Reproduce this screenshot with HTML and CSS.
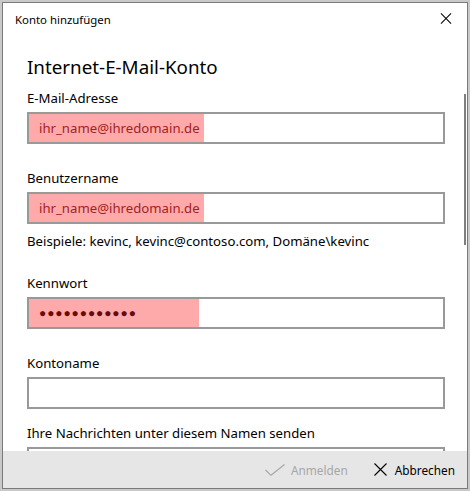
FILE: index.html
```html
<!DOCTYPE html>
<html lang="de">
<head>
    <meta charset="UTF-8">
    <link rel="stylesheet" href="styles.css">
    <title>Konto hinzufügen</title>
</head>
<body>
    <div class="window">
        <div class="titlebar">
            <span class="title">Konto hinzufügen</span>
            <svg class="close" width="12" height="12" viewBox="0 0 12 12">
                <path d="M0.5 0.5 L11.5 11.5 M11.5 0.5 L0.5 11.5" stroke="#000" stroke-width="1.1" fill="none"/>
            </svg>
        </div>

        <div class="content">
            <h1>Internet-E-Mail-Konto</h1>

            <div class="field first">
                <label>E-Mail-Adresse</label>
                <div class="input"><span class="filled">ihr_name@ihredomain.de</span></div>
            </div>

            <div class="field">
                <label>Benutzername</label>
                <div class="input"><span class="filled">ihr_name@ihredomain.de</span></div>
                <div class="hint">Beispiele: kevinc, kevinc@contoso.com, Domäne\kevinc</div>
            </div>

            <div class="field after-hint">
                <label>Kennwort</label>
                <div class="input"><span class="filled dots">●●●●●●●●●●●●</span></div>
            </div>

            <div class="field">
                <label>Kontoname</label>
                <div class="input"></div>
            </div>

            <div class="field tight">
                <label>Ihre Nachrichten unter diesem Namen senden</label>
                <div class="input"></div>
            </div>

            <div class="scrollbar"></div>
        </div>

        <div class="footer">
            <span class="action disabled">
                <svg width="20" height="12" viewBox="0 0 20 12">
                    <path d="M0.5 6 L6 11.3 L19.5 0.5" stroke="#a6a6a6" stroke-width="1.1" fill="none"/>
                </svg>
                Anmelden
            </span>
            <span class="action">
                <svg width="13" height="13" viewBox="0 0 13 13">
                    <path d="M0.5 0.5 L12.5 12.5 M12.5 0.5 L0.5 12.5" stroke="#000" stroke-width="1.1" fill="none"/>
                </svg>
                Abbrechen
            </span>
        </div>
    </div>
</body>
</html>
```

FILE: styles.css
```css
body {
    margin: 0;
    padding: 2px 1px 0 2px;
    background-color: #c9c9c9;
    font-family: 'Noto Sans', 'Open Sans', sans-serif;
    color: #000;
}

.window {
    width: 464px;
    height: 485px;
    border: 1px solid #7a7a7a;
    background-color: #fff;
    display: flex;
    flex-direction: column;
    overflow: hidden;
}

.titlebar {
    height: 30px;
    flex-shrink: 0;
    display: flex;
    align-items: center;
    justify-content: space-between;
    padding: 0 15px 0 12px;
}

.title {
    font-size: 11.4px;
    margin-top: 2px;
}

.close {
    width: 12px;
    height: 11px;
    margin-top: 1px;
}

.content {
    flex: 1;
    position: relative;
    overflow: hidden;
    padding-left: 24px;
}

h1 {
    font-size: 18.8px;
    font-weight: normal;
    line-height: 28px;
    margin: 20px 0 0;
}

.field {
    margin-top: 24px;
}

.field.first {
    margin-top: 7px;
}

.field.after-hint {
    margin-top: 22px;
}

.field.tight {
    margin-top: 14px;
}

label {
    display: block;
    font-size: 13.2px;
    line-height: 20px;
    margin-bottom: 4px;
}

.input {
    width: 414px;
    height: 28px;
    border: 2px solid #999;
    display: flex;
}

.filled {
    background-color: #ffaaaa;
    color: #a21d24;
    font-size: 13.2px;
    line-height: 28px;
    padding: 0 4px 0 10px;
}

.dots {
    font-size: 12px;
    letter-spacing: 0.9px;
    width: 156px;
    color: #6a0a0a;
}

.hint {
    font-size: 13.2px;
    line-height: 20px;
    margin-top: 7px;
}

.scrollbar {
    position: absolute;
    right: 1px;
    top: 61px;
    width: 2px;
    height: 151px;
    background-color: #7f7f7f;
}

.footer {
    height: 37px;
    flex-shrink: 0;
    background-color: #e6e6e6;
    display: flex;
    align-items: center;
    justify-content: flex-end;
    gap: 26px;
    padding-right: 12px;
    font-size: 11.8px;
}

.action {
    display: flex;
    align-items: center;
    gap: 6px;
}

.action:last-child {
    gap: 8px;
}

.action.disabled {
    color: #a6a6a6;
}
```
